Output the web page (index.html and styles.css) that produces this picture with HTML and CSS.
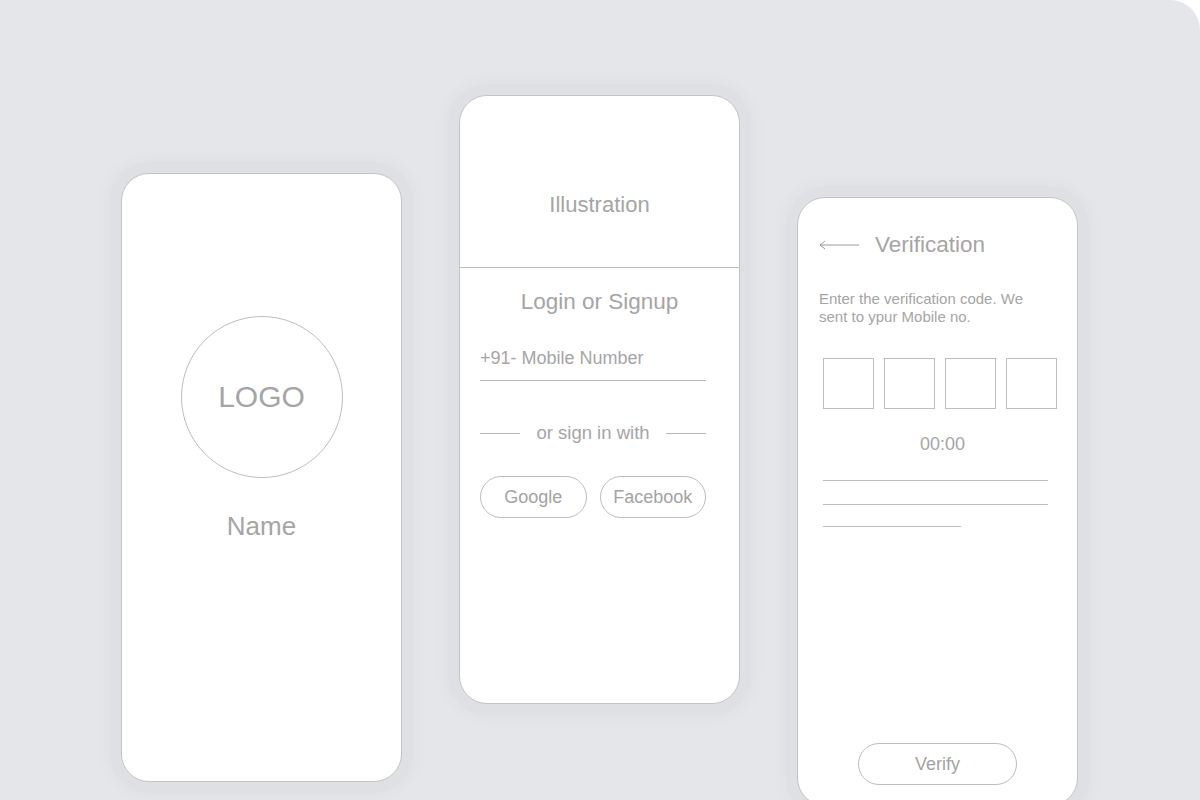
FILE: index.html
```html
<!DOCTYPE html>
<html lang="en">
<head>
    <meta charset="UTF-8">
    <meta name="viewport" content="width=device-width, initial-scale=1.0">
    <title>App Wireframe</title>
    <link rel="stylesheet" href="styles.css">
</head>
<body>
    <div class="stage">

        <!-- Splash -->
        <div class="phone phone-splash">
            <div class="logo">LOGO</div>
            <div class="app-name">Name</div>
        </div>

        <!-- Login -->
        <div class="phone phone-login">
            <div class="illustration">Illustration</div>
            <h2 class="title">Login or Signup</h2>
            <div class="login-body">
                <div class="field">+91- Mobile Number</div>
                <div class="divider">
                    <span class="rule"></span>
                    <span class="divider-text">or sign in with</span>
                    <span class="rule"></span>
                </div>
                <div class="social">
                    <button class="pill google">Google</button>
                    <button class="pill facebook">Facebook</button>
                </div>
            </div>
        </div>

        <!-- Verification -->
        <div class="phone phone-verify">
            <div class="verify-header">
                <svg class="back" width="40" height="10" viewBox="0 0 40 10">
                    <path d="M1 5 H40 M6 1 L1 5 L6 9" fill="none" stroke="#9a9a9a" stroke-width="1"/>
                </svg>
                <span class="title">Verification</span>
            </div>
            <p class="hint">Enter the verification code. We sent to ypur Mobile no.</p>
            <div class="otp">
                <div class="otp-box"></div>
                <div class="otp-box"></div>
                <div class="otp-box"></div>
                <div class="otp-box"></div>
            </div>
            <div class="timer">00:00</div>
            <div class="lines">
                <span class="line"></span>
                <span class="line"></span>
                <span class="line short"></span>
            </div>
            <button class="pill verify">Verify</button>
        </div>

    </div>
</body>
</html>
```

FILE: styles.css
```css
body {
    margin: 0;
    padding: 0;
    background: #ffffff;
    font-family: "Liberation Sans", Arial, sans-serif;
    color: #a5a5a5;
    overflow: hidden;
}

.stage {
    width: 1200px;
    height: 800px;
    background: #e5e6ea;
    border-top-right-radius: 30px;
    display: flex;
    align-items: flex-start;
    gap: 57px;
    padding-left: 121px;
    box-sizing: border-box;
    overflow: hidden;
}

.phone {
    width: 281px;
    height: 609px;
    flex: none;
    box-sizing: border-box;
    background: #ffffff;
    border: 1px solid #c3c3c5;
    border-radius: 28px;
    box-shadow: 0 0 0 11px #dfe0e4, 0 0 18px 12px rgba(0, 0, 0, 0.03);
    display: flex;
    flex-direction: column;
}

/* splash */
.phone-splash {
    margin-top: 173px;
    align-items: center;
}

.logo {
    width: 162px;
    height: 162px;
    margin-top: 142px;
    border: 1px solid #bdbdbd;
    border-radius: 50%;
    box-sizing: border-box;
    display: flex;
    align-items: center;
    justify-content: center;
    font-size: 30px;
}

.app-name {
    margin-top: 33px;
    font-size: 26px;
    line-height: 30px;
}

/* login */
.phone-login {
    margin-top: 95px;
}

.illustration {
    height: 172px;
    box-sizing: border-box;
    padding-top: 97px;
    border-bottom: 1px solid #bdbdbd;
    text-align: center;
    font-size: 22px;
    line-height: 24px;
}

.title {
    margin: 22px 0 0;
    font-weight: normal;
    font-size: 22.5px;
    line-height: 24px;
    text-align: center;
}

.login-body {
    padding: 0 33px 0 20px;
}

.field {
    margin-top: 34px;
    font-size: 18px;
    line-height: 20px;
    padding-bottom: 12px;
    border-bottom: 1px solid #b5b5b5;
}

.divider {
    margin-top: 42px;
    display: flex;
    align-items: center;
    gap: 16px;
    font-size: 18.5px;
    line-height: 20px;
}

.rule {
    flex: 1;
    height: 1px;
    background: #b5b5b5;
}

.social {
    margin-top: 33px;
    display: flex;
    gap: 13px;
}

.pill {
    height: 42px;
    background: #ffffff;
    border: 1px solid #bdbdbd;
    border-radius: 21px;
    font-family: inherit;
    font-size: 18px;
    color: #a3a3a3;
    padding: 0;
}

.google {
    width: 107px;
}

.facebook {
    width: 107px;
}

/* verification */
.phone-verify {
    margin-top: 197px;
    padding: 0 0 20px 21px;
}

.verify-header {
    margin-top: 35px;
    display: flex;
    align-items: center;
    gap: 16px;
}

.verify-header .title {
    margin: 0;
    text-align: left;
}

.hint {
    margin: 33px 0 0;
    width: 215px;
    font-size: 15px;
    line-height: 18px;
}

.otp {
    margin: 32px 0 0 4px;
    display: flex;
    gap: 10px;
    width: 235px;
}

.otp-box {
    width: 51px;
    height: 51px;
    box-sizing: border-box;
    border: 1px solid #bdbdbd;
}

.timer {
    margin-top: 24px;
    width: 247px;
    text-align: center;
    font-size: 18px;
    line-height: 22px;
}

.lines {
    margin: 25px 0 0 4px;
    display: flex;
    flex-direction: column;
    gap: 23px;
}

.line {
    display: block;
    width: 225px;
    height: 1px;
    background: #bdbdbd;
}

.lines .line:last-child {
    margin-top: -2px;
}

.line.short {
    width: 138px;
}

.verify {
    margin: auto 0 0 39px;
    width: 159px;
}
```
